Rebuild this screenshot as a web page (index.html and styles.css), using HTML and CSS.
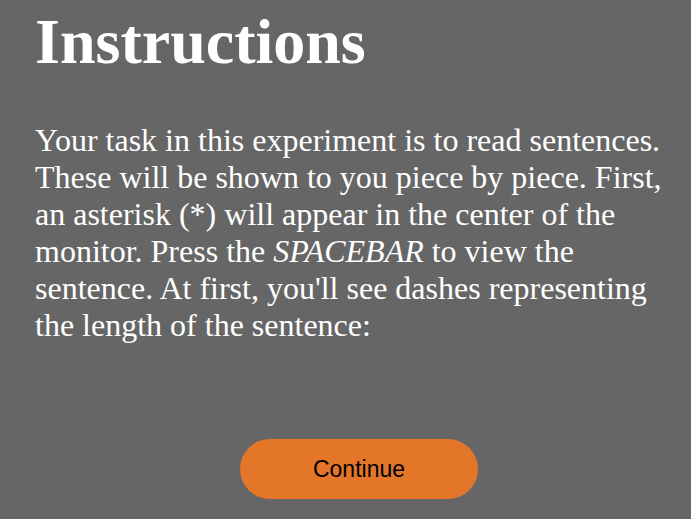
FILE: index.html
```html
<!DOCTYPE html>
<html>
<head>
<meta charset="utf-8">
<link rel="stylesheet" href="styles.css">
</head>
<body>
<main class="page">
  <h1 class="title">Instructions</h1>
  <p class="text">Your task in this experiment is to read sentences. These will be shown to you piece by piece. First, an asterisk (*) will appear in the center of the monitor. Press the <em>SPACEBAR</em> to view the sentence. At first, you'll see dashes representing the length of the sentence:</p>
  <div class="actions">
    <button class="btn">Continue</button>
  </div>
</main>
</body>
</html>
```

FILE: styles.css
```css
html, body {
  margin: 0;
  padding: 0;
  background: #666666;
  height: 100%;
  overflow: hidden;
}
.page {
  padding: 5px 8px 0 35px;
  font-family: "Liberation Serif", "Times New Roman", serif;
  font-size: 32px;
  color: #ffffff;
}
.title {
  font-size: 64px;
  font-weight: bold;
  margin: 0 0 43px 0;
}
.text {
  margin: 0;
}
.actions {
  display: flex;
  justify-content: center;
  margin-top: 95px;
}
.btn {
  width: 238px;
  height: 60px;
  border: none;
  border-radius: 30px;
  background: #e37629;
  color: #000000;
  font-family: "Liberation Sans", Arial, sans-serif;
  font-size: 23px;
  padding: 0;
}
```
